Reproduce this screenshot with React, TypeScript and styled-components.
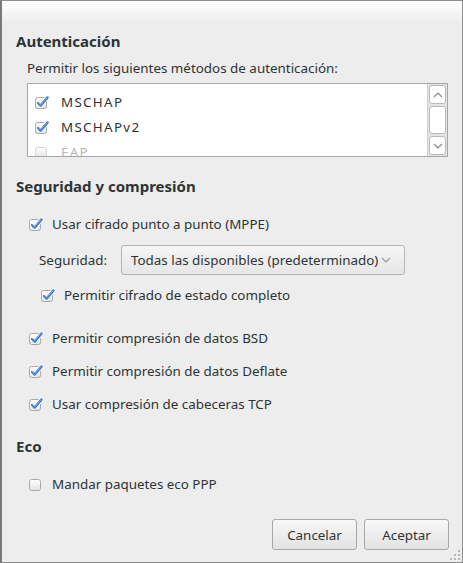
import styled, { createGlobalStyle } from 'styled-components';

const GlobalStyle = createGlobalStyle`
  html, body {
    margin: 0;
    padding: 0;
    background: #6b6b6b;
  }
  * {
    box-sizing: border-box;
  }
`;

const Window = styled.div`
  width: 463px;
  height: 563px;
  background: #ededed;
  border: 1px solid #8e8e8e;
  border-left: 2px solid #7a7a7a;
  display: flex;
  flex-direction: column;
  font-family: "Noto Sans", "Open Sans", sans-serif;
  font-size: 13.4px;
  color: #2e3436;
  position: relative;
  overflow: hidden;
`;

const TitleBar = styled.div`
  height: 22px;
  flex: none;
  background: linear-gradient(to bottom, #ffffff 0%, #f4f4f4 60%, #ededed 100%);
`;

const Content = styled.div`
  flex: 1;
  display: flex;
  flex-direction: column;
  padding: 8px 13px 0 14px;
`;

const SectionTitle = styled.div<{ $gap?: number }>`
  font-weight: bold;
  font-size: 15px;
  line-height: 20px;
  margin-top: ${(p) => p.$gap ?? 0}px;
`;

const Hint = styled.div`
  line-height: 20px;
  margin: 7px 0 0 11px;
`;

const ListBox = styled.div`
  margin: 5px 0 0 11px;
  width: 421px;
  height: 74px;
  background: #fff;
  border: 1px solid #a6a6a6;
  display: flex;
  overflow: hidden;
`;

const ListRows = styled.div`
  flex: 1;
  display: flex;
  flex-direction: column;
  padding: 9px 0 0 7px;
  gap: 7px;
`;

const ListRow = styled.div<{ $dim?: boolean }>`
  display: flex;
  align-items: center;
  height: 20px;
  gap: 10px;
  letter-spacing: 1.3px;
  color: ${(p) => (p.$dim ? '#b8b8b8' : '#2e3436')};
`;

const ScrollBar = styled.div`
  width: 20px;
  flex: none;
  background: #e4e4e4;
  border-left: 1px solid #d0d0d0;
  display: flex;
  flex-direction: column;
  padding: 1px 1px;
  gap: 2px;
`;

const ScrollButton = styled.div<{ $grow?: boolean }>`
  height: ${(p) => (p.$grow ? 'auto' : '19px')};
  flex: ${(p) => (p.$grow ? 1 : 'none')};
  background: #fff;
  border: 1px solid #b9b9b9;
  border-radius: 3px;
  display: flex;
  align-items: center;
  justify-content: center;
`;

const CheckRow = styled.label<{ $gap?: number; $indent?: number }>`
  display: flex;
  align-items: center;
  height: 20px;
  gap: 7px;
  margin-top: ${(p) => p.$gap ?? 0}px;
  margin-left: ${(p) => p.$indent ?? 13}px;
`;

const ComboRow = styled.div`
  display: flex;
  align-items: center;
  margin: 11px 0 0 23px;
  gap: 14px;
`;

const Combo = styled.div`
  width: 284px;
  height: 30px;
  border: 1px solid #b4b4b4;
  border-radius: 3px;
  background: linear-gradient(to bottom, #f6f6f6, #e6e6e6);
  display: flex;
  align-items: center;
  gap: 3px;
  padding: 0 4px 0 9px;
  white-space: nowrap;
`;

const Footer = styled.div`
  margin-top: 25px;
  display: flex;
  justify-content: flex-end;
  gap: 7px;
`;

const Button = styled.button`
  width: 85px;
  height: 31px;
  font-family: inherit;
  font-size: 13.4px;
  color: #2e3436;
  border: 1px solid #a8a8a8;
  border-radius: 3px;
  background: linear-gradient(to bottom, #f8f8f8, #e2e2e2);
  padding: 0;
`;

const Grip = styled.svg`
  position: absolute;
  right: 1px;
  bottom: 1px;
`;

function Check({ checked = true, dim = false }: { checked?: boolean; dim?: boolean }) {
  return (
    <svg width="16" height="16" viewBox="0 0 16 16" style={{ flex: 'none' }}>
      <defs>
        <linearGradient id="cbfill" x1="0" y1="0" x2="0" y2="1">
          <stop offset="0" stopColor="#ffffff" />
          <stop offset="1" stopColor="#e2e2e2" />
        </linearGradient>
      </defs>
      <rect x="0.5" y="3.5" width="11" height="11" rx="2" fill="url(#cbfill)" stroke={dim ? '#d6d6d6' : '#a9a9a9'} />
      {checked && (
        <>
          <path d="M3 9 L5.6 11.6 L12.6 3.4" fill="none" stroke="#ffffff" strokeWidth="4.2" strokeLinecap="round" strokeLinejoin="round" />
          <path d="M3 9 L5.6 11.6 L12.6 3.4" fill="none" stroke="#3a78c4" strokeWidth="2.4" strokeLinecap="round" strokeLinejoin="round" />
          <path d="M3.6 8.9 L5.6 10.8 L12 3.6" fill="none" stroke="#8fbdf0" strokeWidth="0.8" strokeLinecap="round" />
        </>
      )}
    </svg>
  );
}

function Chevron({ up = false, color = '#8a8a8a' }: { up?: boolean; color?: string }) {
  return (
    <svg width="10" height="6" viewBox="0 0 10 6" style={{ flex: 'none' }}>
      <path d={up ? 'M1 5 L5 1 L9 5' : 'M1 1 L5 5 L9 1'} fill="none" stroke={color} strokeWidth="1.2" />
    </svg>
  );
}

export default function App() {
  return (
    <>
      <GlobalStyle />
      <Window>
        <TitleBar />
        <Content>
          <SectionTitle>Autenticación</SectionTitle>
          <Hint>Permitir los siguientes métodos de autenticación:</Hint>
          <ListBox>
            <ListRows>
              <ListRow>
                <Check />
                MSCHAP
              </ListRow>
              <ListRow>
                <Check />
                MSCHAPv2
              </ListRow>
              <ListRow $dim>
                <Check checked={false} dim />
                EAP
              </ListRow>
            </ListRows>
            <ScrollBar>
              <ScrollButton>
                <Chevron up />
              </ScrollButton>
              <ScrollButton $grow />
              <ScrollButton>
                <Chevron />
              </ScrollButton>
            </ScrollBar>
          </ListBox>

          <SectionTitle $gap={19}>Seguridad y compresión</SectionTitle>
          <CheckRow $gap={18}>
            <Check />
            Usar cifrado punto a punto (MPPE)
          </CheckRow>
          <ComboRow>
            <span>Seguridad:</span>
            <Combo>
              <span>Todas las disponibles (predeterminado)</span>
              <Chevron color="#9a9a9a" />
            </Combo>
          </ComboRow>
          <CheckRow $gap={10} $indent={25}>
            <Check />
            Permitir cifrado de estado completo
          </CheckRow>
          <CheckRow $gap={23}>
            <Check />
            Permitir compresión de datos BSD
          </CheckRow>
          <CheckRow $gap={13}>
            <Check />
            Permitir compresión de datos Deflate
          </CheckRow>
          <CheckRow $gap={13}>
            <Check />
            Usar compresión de cabeceras TCP
          </CheckRow>

          <SectionTitle $gap={22}>Eco</SectionTitle>
          <CheckRow $gap={18}>
            <Check checked={false} />
            Mandar paquetes eco PPP
          </CheckRow>

          <Footer>
            <Button>Cancelar</Button>
            <Button>Aceptar</Button>
          </Footer>
        </Content>
        <Grip width="12" height="12" viewBox="0 0 12 12">
          {[
            [9, 1], [9, 5], [5, 5], [9, 9], [5, 9], [1, 9],
          ].map(([x, y]) => (
            <rect key={`${x}-${y}`} x={x} y={y} width="2" height="2" fill="#b5b5b5" />
          ))}
        </Grip>
      </Window>
    </>
  );
}
